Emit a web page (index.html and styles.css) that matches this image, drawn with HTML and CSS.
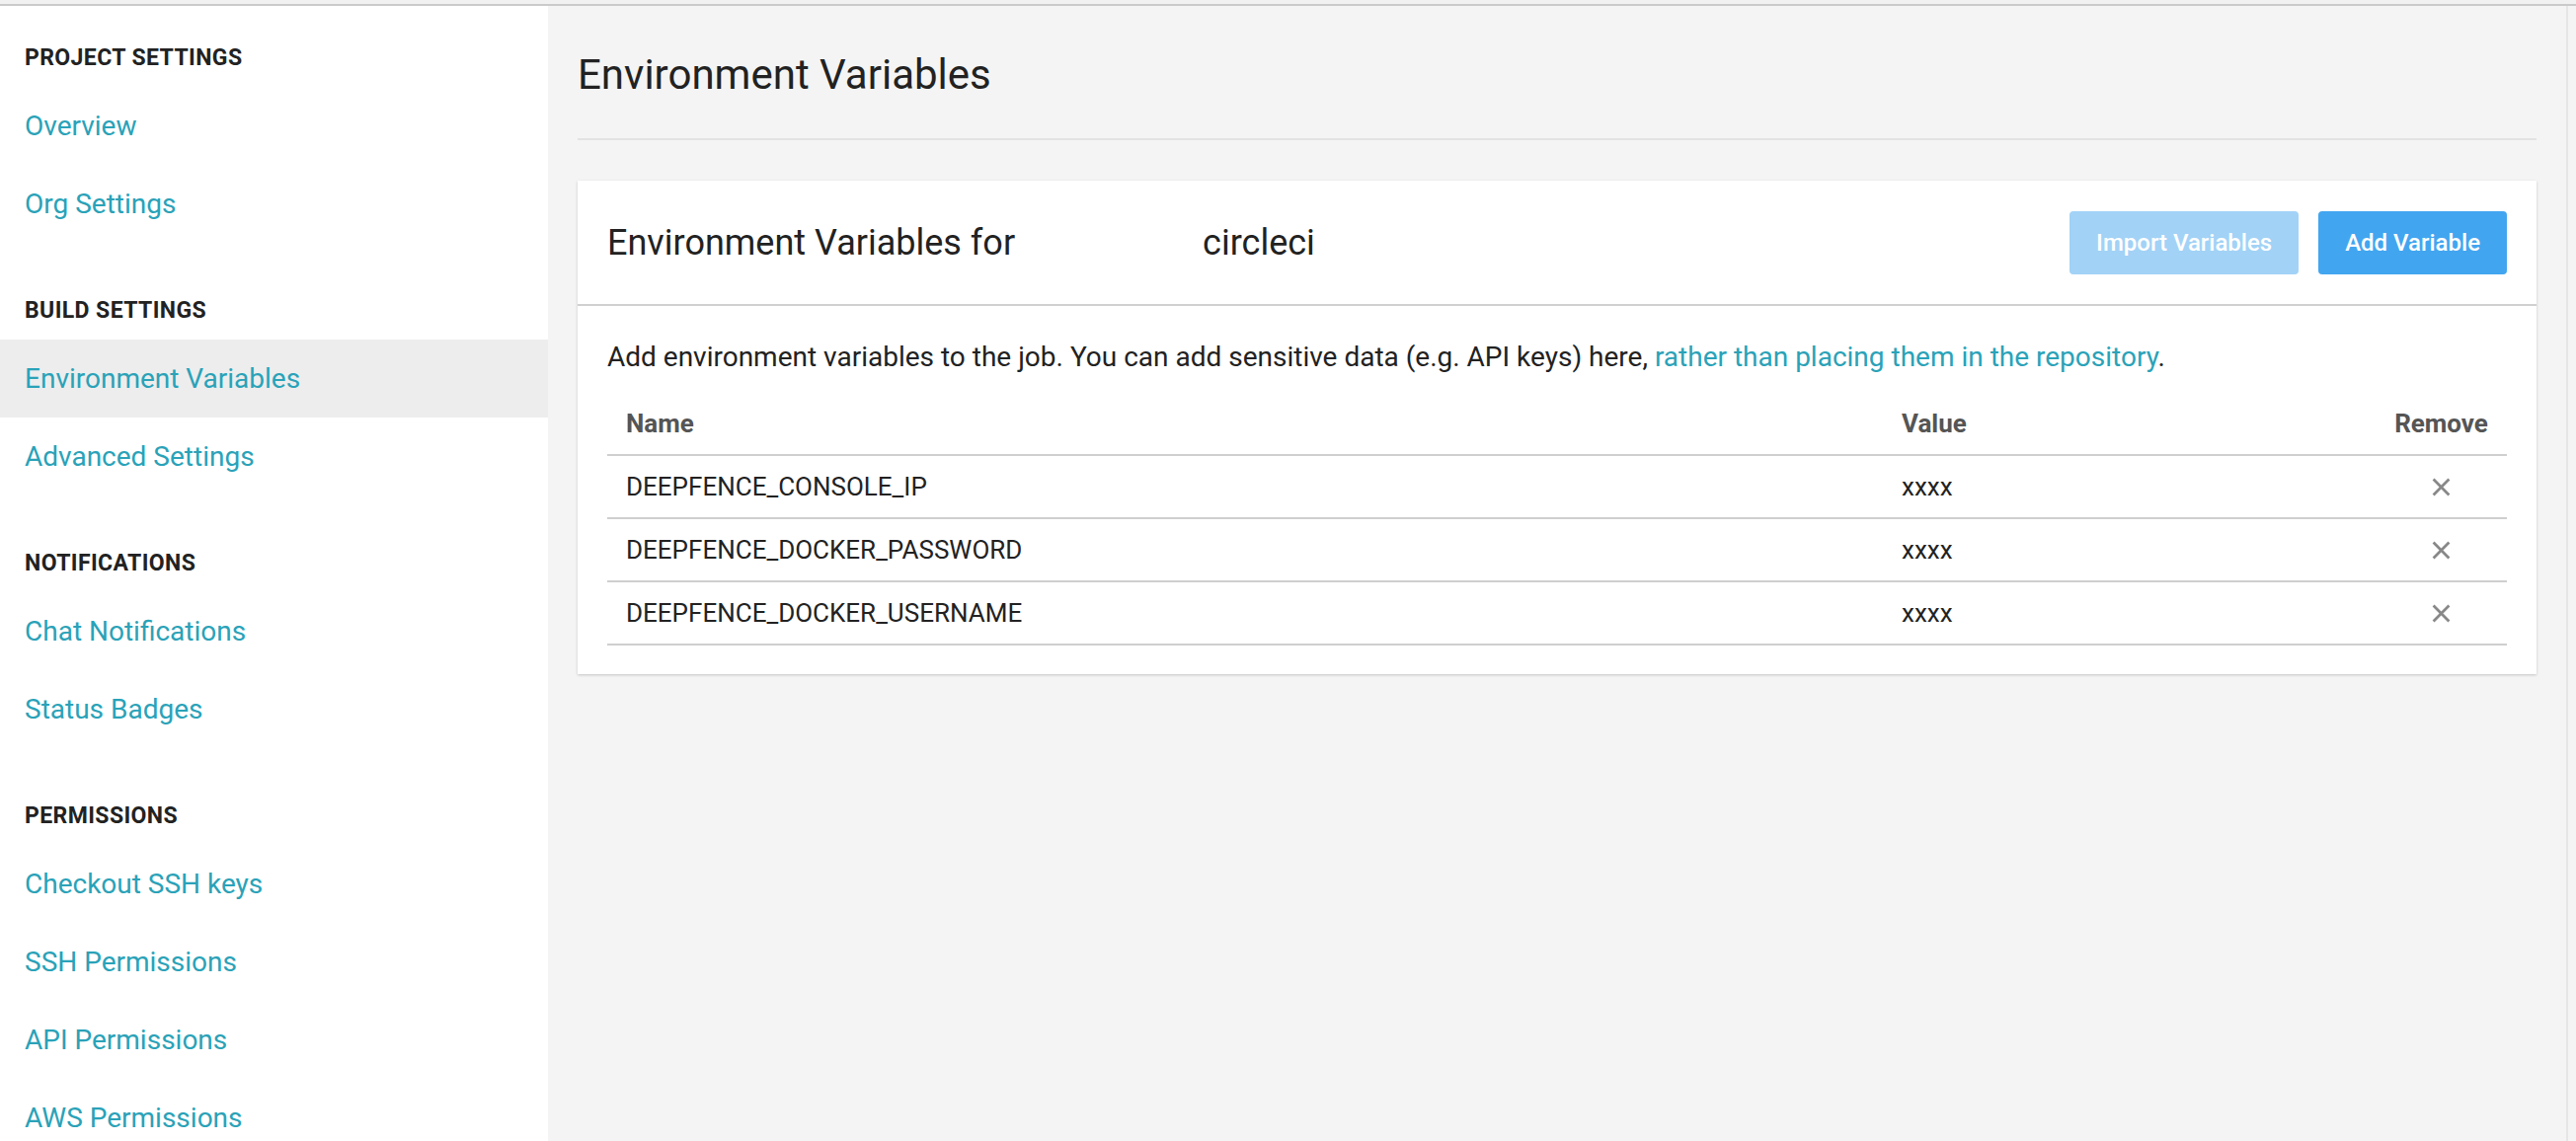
FILE: index.html
```html
<!DOCTYPE html>
<html lang="en">
<head>
<meta charset="utf-8">
<title>Environment Variables</title>
<link rel="stylesheet" href="styles.css">
</head>
<body>
<div class="topbar"></div>
<div class="layout">
  <nav class="sidebar">
    <section class="nav-section">
      <h2 class="nav-heading">PROJECT SETTINGS</h2>
      <a class="nav-link" href="#">Overview</a>
      <a class="nav-link" href="#">Org Settings</a>
    </section>
    <section class="nav-section">
      <h2 class="nav-heading">BUILD SETTINGS</h2>
      <a class="nav-link active" href="#">Environment Variables</a>
      <a class="nav-link" href="#">Advanced Settings</a>
    </section>
    <section class="nav-section">
      <h2 class="nav-heading">NOTIFICATIONS</h2>
      <a class="nav-link" href="#">Chat Notifications</a>
      <a class="nav-link" href="#">Status Badges</a>
    </section>
    <section class="nav-section">
      <h2 class="nav-heading">PERMISSIONS</h2>
      <a class="nav-link" href="#">Checkout SSH keys</a>
      <a class="nav-link" href="#">SSH Permissions</a>
      <a class="nav-link" href="#">API Permissions</a>
      <a class="nav-link" href="#">AWS Permissions</a>
    </section>
  </nav>
  <main class="main">
    <h1 class="page-title">Environment Variables</h1>
    <div class="card">
      <div class="card-header">
        <div class="card-title">Environment Variables for<span class="redacted"></span>circleci</div>
        <div class="actions">
          <button class="btn btn-disabled">Import Variables</button>
          <button class="btn btn-primary">Add Variable</button>
        </div>
      </div>
      <div class="card-body">
        <p class="desc">Add environment variables to the job. You can add sensitive data (e.g. API keys) here, <a href="#" class="inline-link">rather than placing them in the repository</a>.</p>
        <div class="vars">
          <div class="row head">
            <div class="cell">Name</div>
            <div class="cell">Value</div>
            <div class="cell center">Remove</div>
          </div>
          <div class="row">
            <div class="cell">DEEPFENCE_CONSOLE_IP</div>
            <div class="cell">xxxx</div>
            <div class="cell center"><svg class="x" viewBox="0 0 18 18"><path d="M1.5 1.5 16.5 16.5M16.5 1.5 1.5 16.5"/></svg></div>
          </div>
          <div class="row">
            <div class="cell">DEEPFENCE_DOCKER_PASSWORD</div>
            <div class="cell">xxxx</div>
            <div class="cell center"><svg class="x" viewBox="0 0 18 18"><path d="M1.5 1.5 16.5 16.5M16.5 1.5 1.5 16.5"/></svg></div>
          </div>
          <div class="row">
            <div class="cell">DEEPFENCE_DOCKER_USERNAME</div>
            <div class="cell">xxxx</div>
            <div class="cell center"><svg class="x" viewBox="0 0 18 18"><path d="M1.5 1.5 16.5 16.5M16.5 1.5 1.5 16.5"/></svg></div>
          </div>
        </div>
      </div>
    </div>
  </main>
</div>
</body>
</html>
```
FILE: styles.css
```css
* { box-sizing: border-box; }
html, body { margin: 0; padding: 0; }
body {
  font-family: Roboto, "Liberation Sans", sans-serif;
  background: #f4f4f4;
  color: #222;
  height: 1156px;
  overflow: hidden;
}
.topbar {
  height: 6px;
  background: #f1f1f1;
  border-bottom: 2px solid #cacaca;
}
.layout {
  display: flex;
  height: 1150px;
}
.sidebar {
  width: 555px;
  flex: none;
  background: #fff;
  padding-top: 39px;
}
.nav-section + .nav-section { margin-top: 55px; }
.nav-heading {
  margin: 0 0 16px;
  padding-left: 25px;
  font-size: 23px;
  line-height: 27px;
  font-weight: 700;
  letter-spacing: 0.4px;
  color: #222;
}
.nav-link {
  display: block;
  height: 79px;
  line-height: 79px;
  padding-left: 25px;
  font-size: 28px;
  color: #2aa2b8;
  text-decoration: none;
}
.nav-link.active { background: #ededed; }
.main {
  flex: 1;
  margin-right: 8px;
  border-right: 2px solid #e6e6e6;
  padding: 45px 30px 0;
}
.page-title {
  margin: 0 0 41px;
  padding-bottom: 40px;
  border-bottom: 2px solid #e2e2e2;
  font-size: 42px;
  line-height: normal;
  font-weight: 400;
  color: #222;
}
.card {
  background: #fff;
  box-shadow: 0 1px 3px rgba(0,0,0,0.14), 0 1px 2px rgba(0,0,0,0.06);
}
.card-header {
  height: 127px;
  display: flex;
  align-items: center;
  justify-content: space-between;
  padding: 0 30px;
  border-bottom: 2px solid #d0d0d0;
}
.card-title {
  font-size: 36px;
  color: #222;
  display: flex;
  align-items: baseline;
}
.redacted {
  display: inline-block;
  width: 190px;
}
.actions { display: flex; gap: 20px; }
.btn {
  height: 64px;
  padding: 0 27px;
  border: none;
  border-radius: 4px;
  font-family: Roboto, "Liberation Sans", sans-serif;
  font-size: 24px;
  font-weight: 500;
  color: #fff;
}
.btn-disabled { background: #a2d2f6; }
.btn-primary { background: #42a5f0; }
.card-body { padding: 35px 30px 29px; }
.desc {
  margin: 0 0 20px;
  font-size: 28px;
  line-height: normal;
  color: #222;
}
.inline-link { color: #2aa2b8; text-decoration: none; }
.vars { display: flex; flex-direction: column; }
.row {
  display: grid;
  grid-template-columns: minmax(0, 1fr) 499px 133px;
  height: 64px;
  align-items: center;
  border-bottom: 2px solid #cfcfcf;
  font-size: 26px;
  color: #222;
}
.cell { padding: 0 20px 0 19px; white-space: nowrap; }
.cell.center { display: flex; justify-content: center; padding: 0; }
.row.head { font-size: 26px; font-weight: 700; color: #555; }
.x { width: 19px; height: 19px; }
.x path { stroke: #888; stroke-width: 2.6; fill: none; }
```
